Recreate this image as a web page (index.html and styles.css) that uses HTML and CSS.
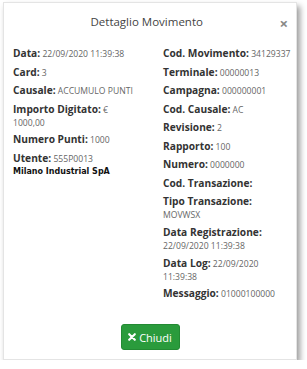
FILE: index.html
```html
<!DOCTYPE html>
<html lang="it">
<head>
  <meta charset="UTF-8" />
  <title>Dettaglio Movimento</title>
  <link rel="stylesheet" href="styles.css">
</head>
<body>

  <div class="modal">
    <div class="modal-header">
      <h4 class="modal-title">Dettaglio Movimento</h4>
      <span class="close">&times;</span>
    </div>

    <div class="modal-body">
      <div class="col">
        <div class="field"><b>Data:</b> 22/09/2020 11:39:38</div>
        <div class="field"><b>Card:</b> 3</div>
        <div class="field"><b>Causale:</b> ACCUMULO PUNTI</div>
        <div class="field"><b>Importo Digitato:</b> €<br>1000,00</div>
        <div class="field"><b>Numero Punti:</b> 1000</div>
        <div class="field"><b>Utente:</b> 555P0013</div>
        <div class="company">Milano Industrial SpA</div>
      </div>
      <div class="col">
        <div class="field"><b>Cod. Movimento:</b> 34129337</div>
        <div class="field"><b>Terminale:</b> 00000013</div>
        <div class="field"><b>Campagna:</b> 000000001</div>
        <div class="field"><b>Cod. Causale:</b> AC</div>
        <div class="field"><b>Revisione:</b> 2</div>
        <div class="field"><b>Rapporto:</b> 100</div>
        <div class="field"><b>Numero:</b> 0000000</div>
        <div class="field"><b>Cod. Transazione:</b></div>
        <div class="field"><b>Tipo Transazione:</b> MOVWSX</div>
        <div class="field"><b>Data Registrazione:</b> 22/09/2020 11:39:38</div>
        <div class="field"><b>Data Log:</b> 22/09/2020<br>11:39:38</div>
        <div class="field"><b>Messaggio:</b> 01000100000</div>
      </div>
    </div>

    <div class="modal-footer">
      <button class="btn-close">
        <svg width="8" height="8" viewBox="0 0 10 10"><path d="M1.5 1.5 L8.5 8.5 M8.5 1.5 L1.5 8.5" stroke="#fff" stroke-width="2.6" stroke-linecap="round"/></svg>
        Chiudi
      </button>
    </div>
  </div>

</body>
</html>
```

FILE: styles.css
```css
* { margin: 0; padding: 0; box-sizing: border-box; }
body {
  font-family: 'Open Sans', sans-serif;
  background: #fff;
  color: #333;
}

.modal {
  width: 294px;
  height: 358px;
  margin: 2px 0 0 3px;
  background: #fff;
  border: 1px solid #e4e4e4;
  box-shadow: 3px 4px 6px rgba(0, 0, 0, 0.4);
  display: flex;
  flex-direction: column;
}

.modal-header {
  display: flex;
  align-items: center;
  padding: 0 8px 0 10px;
  height: 36px;
}
.modal-title {
  flex: 1;
  text-align: center;
  font-size: 11.5px;
  font-weight: 400;
  color: #444;
}
.close {
  font-size: 15px;
  font-weight: bold;
  color: #888;
  margin-top: 4px;
}

.modal-body {
  display: grid;
  grid-template-columns: 125px 128px;
  column-gap: 25px;
  padding: 6px 0 0 9px;
}
.field {
  font-size: 8.6px;
  line-height: 12.25px;
  color: #666;
  margin-bottom: 2.5px;
}
.field b {
  font-size: 10.2px;
  line-height: 16px;
  color: #333;
}
.company {
  font-family: 'DejaVu Sans', sans-serif;
  font-size: 8px;
  font-weight: bold;
  color: #111;
  margin-top: -1px;
}

.modal-footer {
  margin-top: auto;
  padding-bottom: 9px;
  text-align: center;
}
.btn-close {
  font-family: 'Open Sans', sans-serif;
  background: #2a9b3c;
  color: #fff;
  border: 1px solid #238a33;
  border-radius: 3px;
  font-size: 11px;
  height: 26px;
  width: 59px;
  display: inline-flex;
  align-items: center;
  justify-content: center;
  gap: 3px;
}
```
